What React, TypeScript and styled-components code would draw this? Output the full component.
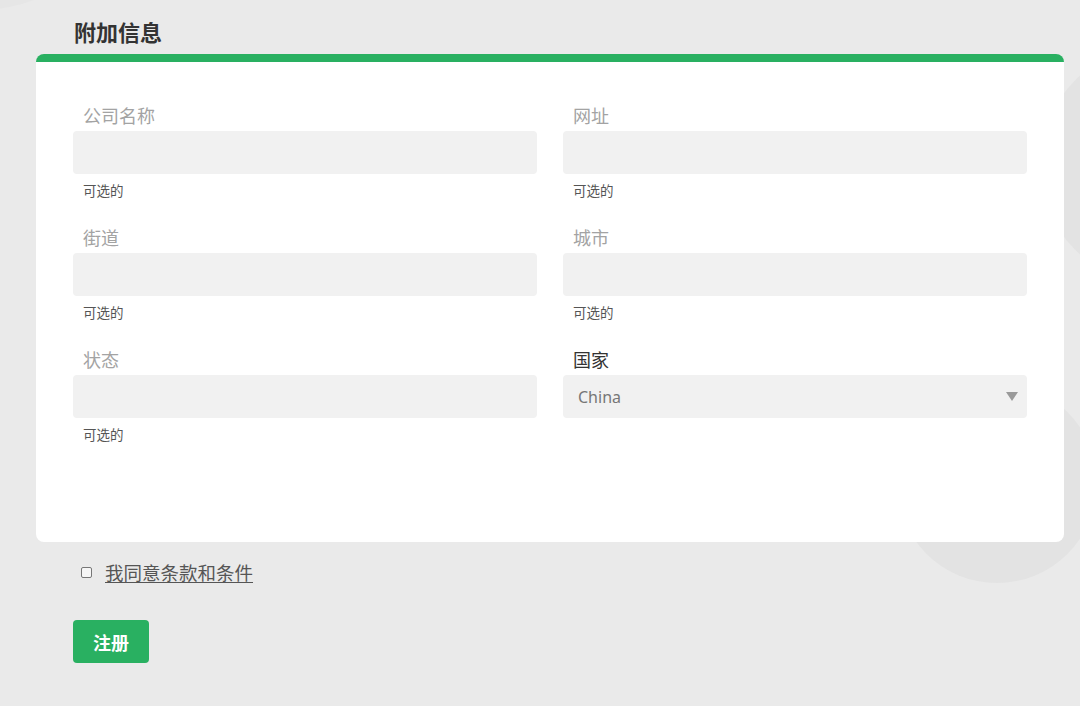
import React from 'react';
import styled, { createGlobalStyle } from 'styled-components';

const GlobalStyle = createGlobalStyle`
  html, body {
    margin: 0;
    padding: 0;
    background: #eaeaea;
  }
  body {
    font-family: "Noto Sans", "Noto Sans CJK SC", sans-serif;
  }
`;

const Page = styled.div`
  position: relative;
  width: 1080px;
  height: 706px;
  overflow: hidden;
  background: #eaeaea;
`;

const Blob = styled.div<{ $size: number; $top: number; $left: number; $color: string }>`
  position: absolute;
  width: ${(p) => p.$size}px;
  height: ${(p) => p.$size}px;
  top: ${(p) => p.$top}px;
  left: ${(p) => p.$left}px;
  border-radius: 50%;
  background: ${(p) => p.$color};
`;

const Content = styled.div`
  position: relative;
  padding: 0 16px 0 36px;
`;

const Title = styled.h2`
  margin: 0 0 8px 38px;
  padding-top: 16px;
  font-family: "Noto Sans CJK SC", sans-serif;
  font-size: 22px;
  font-weight: 700;
  line-height: 30px;
  color: #333;
`;

const Card = styled.div`
  background: #fff;
  border-top: 8px solid #29b061;
  border-radius: 8px;
  padding: 41px 37px 99px;
`;

const FormGrid = styled.div`
  display: grid;
  grid-template-columns: 1fr 1fr;
  column-gap: 26px;
  row-gap: 26px;
`;

const Field = styled.div`
  display: flex;
  flex-direction: column;
`;

const Label = styled.label<{ $dark?: boolean }>`
  padding-left: 10px;
  margin-bottom: 4px;
  font-family: "Noto Sans CJK SC", sans-serif;
  font-size: 18px;
  line-height: 24px;
  color: ${(p) => (p.$dark ? '#333' : '#a3a3a3')};
`;

const Input = styled.input`
  box-sizing: border-box;
  height: 43px;
  border: none;
  border-radius: 4px;
  background: #f1f1f1;
  outline: none;
  padding: 0 15px;
  font-size: 16px;
`;

const Help = styled.span`
  padding-left: 10px;
  margin-top: 7px;
  font-family: "Noto Sans CJK SC", sans-serif;
  font-size: 13.5px;
  line-height: 18px;
  color: #555;
`;

const SelectBox = styled.div`
  box-sizing: border-box;
  height: 43px;
  border-radius: 4px;
  background: #f1f1f1;
  display: flex;
  align-items: center;
  justify-content: space-between;
  padding: 0 9px 0 15px;
  font-family: "Noto Sans", sans-serif;
  font-size: 16px;
  color: #777;
`;

const Arrow = styled.span`
  width: 0;
  height: 0;
  border-left: 6px solid transparent;
  border-right: 6px solid transparent;
  border-top: 9px solid #9a9a9a;
`;

const AgreeRow = styled.div`
  display: flex;
  align-items: center;
  gap: 13px;
  margin: 18px 0 0 45px;
`;

const Check = styled.span`
  box-sizing: border-box;
  width: 11px;
  height: 11px;
  border: 1.5px solid #777;
  border-radius: 2px;
  background: #f6f6f6;
`;

const AgreeText = styled.span`
  font-family: "Noto Sans CJK SC", sans-serif;
  font-size: 18.5px;
  line-height: 24px;
  color: #555;
  text-decoration: underline;
  text-underline-offset: 2px;
`;

const SubmitButton = styled.button`
  margin: 36px 0 0 37px;
  width: 76px;
  height: 43px;
  border: none;
  border-radius: 4px;
  background: #29b061;
  color: #fff;
  font-family: "Noto Sans CJK SC", sans-serif;
  font-size: 18px;
  font-weight: 700;
  cursor: pointer;
`;

const fields = [
  { label: '公司名称', help: '可选的' },
  { label: '网址', help: '可选的' },
  { label: '街道', help: '可选的' },
  { label: '城市', help: '可选的' },
  { label: '状态', help: '可选的' },
];

const App: React.FC = () => {
  return (
    <Page>
      <GlobalStyle />
      <Blob $size={300} $top={-290} $left={-170} $color="#e6e6e6" />
      <Blob $size={240} $top={45} $left={1040} $color="#e3e3e3" />
      <Blob $size={200} $top={383} $left={897} $color="#e3e3e3" />
      <Content>
        <Title>附加信息</Title>
        <Card>
          <FormGrid>
            {fields.map((f) => (
              <Field key={f.label}>
                <Label>{f.label}</Label>
                <Input />
                <Help>{f.help}</Help>
              </Field>
            ))}
            <Field>
              <Label $dark>国家</Label>
              <SelectBox>
                China
                <Arrow />
              </SelectBox>
            </Field>
          </FormGrid>
        </Card>
        <AgreeRow>
          <Check />
          <AgreeText>我同意条款和条件</AgreeText>
        </AgreeRow>
        <SubmitButton>注册</SubmitButton>
      </Content>
    </Page>
  );
};

export default App;
